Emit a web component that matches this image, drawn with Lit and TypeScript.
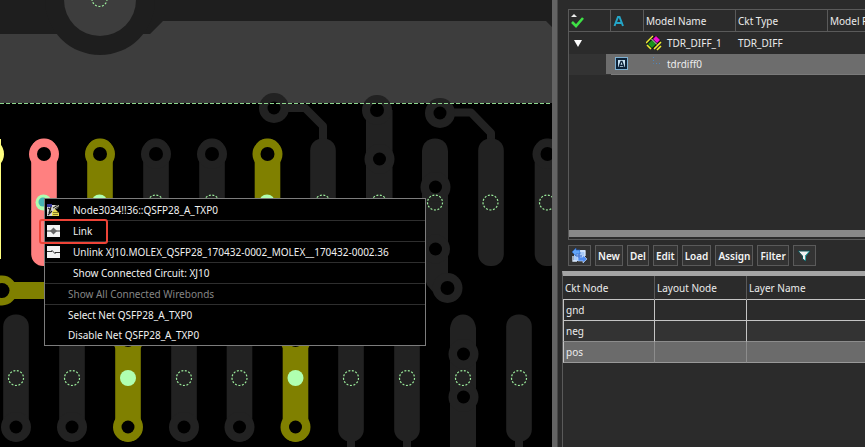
import { LitElement, html, svg, css, nothing } from "lit";
import { customElement } from "lit/decorators.js";
import { classMap } from "lit/directives/class-map.js";

type Tone = "dim" | "olive" | "red";

interface Pad {
  x: number;
  tone: Tone;
  ring: boolean;
  point: "dotted" | "solid";
}

const UPPER: Pad[] = [
  { x: 44, tone: "red", ring: true, point: "solid" },
  { x: 100, tone: "olive", ring: true, point: "solid" },
  { x: 156, tone: "dim", ring: true, point: "dotted" },
  { x: 212, tone: "dim", ring: true, point: "dotted" },
  { x: 267.5, tone: "olive", ring: true, point: "solid" },
  { x: 323, tone: "dim", ring: false, point: "dotted" },
  { x: 491, tone: "dim", ring: false, point: "dotted" },
  { x: 547.5, tone: "dim", ring: true, point: "dotted" },
];

const LOWER: Pad[] = [
  { x: 16, tone: "dim", ring: true, point: "dotted" },
  { x: 72, tone: "dim", ring: true, point: "dotted" },
  { x: 128, tone: "olive", ring: true, point: "solid" },
  { x: 184, tone: "dim", ring: true, point: "dotted" },
  { x: 239.5, tone: "dim", ring: true, point: "dotted" },
  { x: 295.5, tone: "olive", ring: true, point: "solid" },
  { x: 351, tone: "dim", ring: false, point: "dotted" },
  { x: 407, tone: "dim", ring: false, point: "dotted" },
  { x: 519, tone: "dim", ring: false, point: "dotted" },
];

@customElement("board-canvas")
class BoardCanvas extends LitElement {
  static styles = css`
    :host { display: block; min-width: 0; overflow: hidden; background: #000; }
    .board { display: block; width: 100%; height: 100%; }
    .dim { fill: #222; }
    .olive { fill: #808000; }
    .red { fill: #ff8080; }
    .yellow { fill: #ffff80; }
    .hole { fill: #000; }
    .void { fill: #1e1e1e; }
    .plane { fill: #3d3d3d; }
    .trace { fill: none; stroke: #222; stroke-width: 8; stroke-linejoin: round; }
    .dotted { fill: none; stroke: #9cec9c; stroke-width: 1.2; stroke-dasharray: 2 1.6; }
    .solid { fill: #b0ffb0; }
    .active { fill: #46b4b4; }
    .edge { stroke: #8cd48c; stroke-width: 1; stroke-dasharray: 4 2; }
  `;

  private via(x: number, y: number, tone: string = "dim", hole = 6.5) {
    return svg`<circle class=${tone} cx=${x} cy=${y} r="15"/>
      <circle class="hole" cx=${x} cy=${y} r=${hole}/>`;
  }

  private point(x: number, y: number, kind: string) {
    return svg`<circle class=${kind} cx=${x} cy=${y} r=${kind === "solid" ? 8 : 7.5}/>`;
  }

  private upper(p: Pad) {
    return svg`<rect class=${p.tone} x=${p.x - 12.8} y="138.500" width="25.600" height="127.500" rx="12"/>
      ${p.ring ? this.via(p.x, 154, p.tone, 7) : nothing}
      ${this.point(p.x - 0.5, 202.5, p.point)}`;
  }

  private lower(p: Pad) {
    return svg`<rect class=${p.tone} x=${p.x - 12.8} y="314.500" width="25.600" height="127" rx="12"/>
      ${p.ring ? this.via(p.x, 427, p.tone) : svg`<path class="trace" d="M${p.x} 436V460"/>`}
      ${p.tone === "olive" ? this.via(p.x, 340, "olive", 7) : nothing}
      ${this.point(p.x, 378, p.point)}`;
  }

  render() {
    return html`<svg class="board" viewBox="0 0 552 447" preserveAspectRatio="xMinYMin slice" role="img" aria-label="Board layout">
      <rect class="plane" width="552" height="103"/>
      <path class="void" d="M0 0H552V27L546 21H163L150 34H0Z"/>
      <circle class="void" cx="100" cy="0" r="55"/>
      <circle class="plane" cx="100" cy="0" r="36"/>
      <circle class="dotted" cx="99.500" cy="-1" r="7.500"/>

      <rect class="yellow" x="-24" y="139" width="25" height="120"/>
      <circle class="yellow" cx="-11" cy="154" r="15"/>

      <path class="trace" d="M286 108H305L323 126V144"/>
      ${this.via(274, 108)}
      <path class="trace" d="M452 112.500H471L491 133V146"/>
      ${this.via(440, 113)}

      <path class="dim" d="M366 110H392.500V266H366Z"/>
      ${this.via(377, 110, "dim", 7)}
      ${this.via(379.5, 159)}
      ${this.point(379, 202.5, "dotted")}

      <path class="dim" d="M422 151Q423 139 435 138.500Q447 139 448 151V280L440 300L427 285L422 270Z"/>
      <circle class="dim" cx="435.500" cy="249" r="14.500"/>
      ${this.via(435.5, 187)}
      <circle class="hole" cx="435.500" cy="249" r="6.500"/>
      ${this.via(447.5, 288, "dim", 7)}
      ${this.point(435, 202.5, "dotted")}

      ${UPPER.map((p) => this.upper(p))}
      <circle class="active" cx="43" cy="202" r="4.500"/>

      <rect class="olive" x="8" y="282" width="60" height="17"/>
      ${this.via(2, 290.5, "olive", 7.5)}

      <path class="dim" d="M450 328Q452 315 463 314.500Q474 315 476 328V447H450Z"/>
      ${this.via(463.5, 354)}
      ${this.via(463.5, 397)}
      ${this.point(463, 378, "dotted")}
      ${LOWER.map((p) => this.lower(p))}

      <path class="edge" d="M0 103.500H552"/>
    </svg>`;
  }
}

@customElement("context-menu")
class ContextMenu extends LitElement {
  static styles = css`
    :host { display: block; }
    .menu {
      position: relative;
      width: 382px;
      box-sizing: border-box;
      border: 1px solid #7c7c7c;
      background: #000;
      padding-top: 1px;
    }
    .item {
      display: grid;
      grid-template-columns: 28px 1fr;
      align-items: center;
      width: 100%;
      height: 21px;
      padding: 0;
      border: 0;
      border-bottom: 1px solid #2e2e2e;
      background: none;
      color: #f0f0f0;
      font: inherit;
      text-align: left;
      white-space: nowrap;
    }
    .item.outer { grid-template-columns: 23px 1fr; }
    .item.plain { height: 20px; border-bottom: 0; }
    .item:disabled { color: #858585; }
    .icon { display: block; width: 13px; height: 13px; margin-left: 2px; }
    .focus {
      position: absolute;
      left: -6px;
      top: 20px;
      width: 69px;
      height: 25px;
      box-sizing: border-box;
      border: 2px solid #ee4438;
      border-radius: 3px;
      pointer-events: none;
    }
  `;

  private nodeIcon = html`<svg class="icon" viewBox="0 0 13 13" aria-hidden="true">
    <path d="M0 1H8V12H0Z" fill="#d8d8d8"/>
    <path d="M0 0H5V3H0Z" fill="#38389a"/>
    <path d="M1 4L4 6M4 3L2 9M1 11L5 7" stroke="#222" stroke-width="1.200" fill="none"/>
    <path d="M5 3L9 1H12L11 4L7 6Z" fill="#c8c8b4"/>
    <path d="M6 4L11 1M8 5L11 3" stroke="#222" stroke-width="1" fill="none"/>
    <path d="M5 8L8 5L12 9V12H5Z" fill="#e8dc50"/>
    <path d="M6 8.500H11M6 10.500H11" stroke="#67601e" stroke-width="0.800"/>
  </svg>`;

  private linkIcon = html`<svg class="icon" viewBox="0 0 13 13" aria-hidden="true">
    <rect width="13" height="12" fill="#f2f2f2"/>
    <path d="M0 6H13" stroke="#333" stroke-width="1"/>
    <path d="M6.500 2.500L10 6L6.500 9.500L3 6Z" fill="#666"/>
  </svg>`;

  private unlinkIcon = html`<svg class="icon" viewBox="0 0 13 13" aria-hidden="true">
    <rect width="13" height="12" fill="#f2f2f2"/>
    <path d="M0 5.500H5M8 6.500H13M4.500 4L8.500 8" stroke="#333" stroke-width="1" fill="none"/>
  </svg>`;

  render() {
    const items = [
      { text: "Node3034!!36::QSFP28_A_TXP0", icon: this.nodeIcon },
      { text: "Link", icon: this.linkIcon },
      { text: "Unlink XJ10.MOLEX_QSFP28_170432-0002_MOLEX__170432-0002.36", icon: this.unlinkIcon },
      { text: "Show Connected Circuit: XJ10" },
      { text: "Show All Connected Wirebonds", outer: true, off: true },
      { text: "Select Net QSFP28_A_TXP0", outer: true, plain: true },
      { text: "Disable Net QSFP28_A_TXP0", outer: true, plain: true },
    ];
    return html`<div class="menu" role="menu">
      ${items.map((i) => html`<button role="menuitem" ?disabled=${i.off}
        class=${classMap({ item: true, outer: !!i.outer, plain: !!i.plain })}
        ><span>${i.icon ?? nothing}</span><span>${i.text}</span></button>`)}
      <div class="focus"></div>
    </div>`;
  }
}

@customElement("model-panel")
class ModelPanel extends LitElement {
  static styles = css`
    :host {
      display: flex;
      flex-direction: column;
      min-width: 0;
      overflow: hidden;
      background: #2b2b2b;
      color: #ececec;
    }
    .models {
      display: flex;
      flex-direction: column;
      flex: 0 0 231px;
      box-sizing: border-box;
      margin: 9px 0 0 10px;
      border: 1px solid #5a5a5a;
      border-right: 0;
      overflow: hidden;
    }
    .scroll { margin-top: auto; margin-bottom: 2px; height: 7px; background: #888; }
    table { table-layout: fixed; border-collapse: separate; border-spacing: 0; }
    th, td {
      box-sizing: border-box;
      height: 21px;
      padding: 0 0 0 2px;
      font-weight: inherit;
      text-align: left;
      white-space: nowrap;
      overflow: hidden;
      vertical-align: middle;
    }
    th { height: 22px; border-bottom: 1px solid #5a5a5a; border-right: 1px solid #5a5a5a; }
    .tree { width: 380px; }
    .tree td { height: 22px; }
    .c-check { width: 42px; }
    .c-a { width: 33px; }
    .c-name { width: 92px; }
    .tree svg { display: block; }
    .named { display: flex; align-items: center; gap: 5px; }
    .tree .picked td { height: 21px; background: #6d6d6d; border-bottom: 1px solid #7a7a7a; }
    .tree .picked td:first-child { background: linear-gradient(90deg, #333 37px, #6d6d6d 37px); border-bottom-color: #333; }
    .tools { display: flex; gap: 4px; margin: 5px 0 5px 10px; }
    .tool {
      box-sizing: border-box;
      height: 21px;
      padding: 0 2px;
      border: 1px solid #5a5a5a;
      background: #333;
      color: #f4f4f4;
      font: inherit;
      font-weight: 600;
      white-space: nowrap;
    }
    .tool.glyph { display: grid; place-items: center; width: 23px; padding: 0; }
    .nodes {
      flex: 1;
      margin-left: 4px;
      border-top: 5px solid #a4a4a4;
      border-left: 1px solid #5a5a5a;
    }
    .grid { width: 100%; }
    .c-ckt, .c-layout { width: 92px; }
    .grid th { height: 24px; border-bottom-color: #c4c4c4; }
    .grid td { border-right: 1px solid #c4c4c4; border-bottom: 1px solid #c4c4c4; }
    .grid td:first-child { border-left: 1px solid #c4c4c4; }
    .grid th:last-child, .grid td:last-child { border-right: 0; }
    .grid .odd td { background: #333; border-bottom-color: #8c8c8c; }
    .grid .on td { background: #6b6b6b; border-right-color: #8c8c8c; border-bottom-color: #999; }
  `;

  render() {
    return html`
      <div class="models">
        <table class="tree">
          <colgroup><col class="c-check"><col class="c-a"><col class="c-name"><col class="c-name"><col></colgroup>
          <thead><tr>
            <th aria-label="Checked"><svg width="14" height="18" viewBox="0 0 14 18">
              <path d="M0 5L3 2L6 5Z" fill="#eee"/>
              <path d="M1 10L5 14L12 6" fill="none" stroke="#3ee045" stroke-width="2.600"/>
            </svg></th>
            <th aria-label="Analysis"><svg width="12" height="12" viewBox="0 0 12 12">
              <path d="M1.500 11L5 2H6.500L10 11M3.500 8H8" fill="none" stroke="#24a6c8" stroke-width="2"/>
            </svg></th>
            <th>Model Name</th><th>Ckt Type</th><th>Model File</th>
          </tr></thead>
          <tbody>
            <tr>
              <td><svg width="14" height="8" viewBox="0 0 14 8"><path d="M3 1H11L7 8Z" fill="#fff"/></svg></td>
              <td></td>
              <td><span class="named"><svg width="16" height="16" viewBox="0 0 16 16">
                <path d="M0 8L7 1" stroke="#f0ee30" stroke-width="1.500"/>
                <path d="M1 9L8 1H11L15 6L8 14L6 14Z" fill="#111"/>
                <path d="M7 4L10 1L14 5L11 8Z" fill="#f010d0"/>
                <path d="M2 9L6 5L10 9L6 13Z" fill="#18921c"/>
                <path d="M5.500 4L11 9.500" stroke="#ddd" stroke-width="1"/>
                <path d="M8 14L15 7M1 10L5 14M11 15L15 11" stroke="#f0ee30" stroke-width="1.600"/>
              </svg>TDR_DIFF_1</span></td>
              <td>TDR_DIFF</td><td></td>
            </tr>
            <tr class="picked">
              <td></td>
              <td><svg width="18" height="14" viewBox="0 0 18 14">
                <rect x="2.500" y="0.500" width="12" height="12" fill="#0c2238" stroke="#7db0d2"/>
                <rect x="5" y="3" width="7" height="7" fill="#c8e2f2"/>
                <path d="M6 10L8 4.500H9L11 10M7 8.500H10" fill="none" stroke="#0c2238" stroke-width="1.300"/>
              </svg></td>
              <td><span class="named"><svg width="16" height="16" viewBox="0 0 16 16">
                <path d="M7.500 1V7.500H16" fill="none" stroke="#4f87bc" stroke-dasharray="1 2"/>
              </svg>tdrdiff0</span></td>
              <td></td><td></td>
            </tr>
          </tbody>
        </table>
        <div class="scroll"></div>
      </div>
      <div class="tools">
        <button class="tool glyph" aria-label="Refresh"><svg width="17" height="16" viewBox="0 0 17 16">
          <rect x="3" y="2" width="11" height="11" fill="#a8caf8"/>
          <path d="M1 4L5 0V2H9V6H5V8Z" fill="#62a4f8" stroke="#245fc0" stroke-width="0.600"/>
          <path d="M16 11L12 7V9H7V13H12V15Z" fill="#4f8cf0" stroke="#cfe2ff" stroke-width="0.600"/>
          <path d="M2 8V13H6M9 3H14V8" fill="none" stroke="#dcecff" stroke-width="1.300"/>
          <path d="M5 8H11M8 6V10" stroke="#3868c8" stroke-width="1"/>
        </svg></button>
        ${["New", "Del", "Edit", "Load", "Assign", "Filter"].map((t) => html`<button class="tool">${t}</button>`)}
        <button class="tool glyph" aria-label="Filter options"><svg width="14" height="12" viewBox="0 0 14 12">
          <path d="M1 1H13L8.500 6V11L5.500 9V6Z" fill="#f0f0f0" stroke="#0d5054" stroke-width="1"/>
          <path d="M12 1.500L8.500 6V10.500" fill="none" stroke="#28a4a4" stroke-width="1"/>
        </svg></button>
      </div>
      <div class="nodes">
        <table class="grid">
          <colgroup><col class="c-ckt"><col class="c-layout"><col></colgroup>
          <thead><tr><th>Ckt Node</th><th>Layout Node</th><th>Layer Name</th></tr></thead>
          <tbody>
            <tr><td>gnd</td><td></td><td></td></tr>
            <tr class="odd"><td>neg</td><td></td><td></td></tr>
            <tr class="on"><td>pos</td><td></td><td></td></tr>
          </tbody>
        </table>
      </div>`;
  }
}

@customElement("app-root")
class AppRoot extends LitElement {
  static styles = css`
    :host {
      display: grid;
      grid-template-columns: minmax(0, 1fr) 6px 307px;
      height: 100vh;
      overflow: hidden;
      font: 10px/14px "Noto Sans", "Open Sans", sans-serif;
    }
    .stage { position: relative; display: grid; min-width: 0; min-height: 0; overflow: hidden; }
    .popup { position: absolute; left: 44px; top: 198px; }
    .split { background: #646464; border-right: 1px solid #484848; box-sizing: border-box; }
  `;

  render() {
    return html`
      <div class="stage">
        <board-canvas></board-canvas>
        <context-menu class="popup"></context-menu>
      </div>
      <div class="split"></div>
      <model-panel></model-panel>`;
  }
}
